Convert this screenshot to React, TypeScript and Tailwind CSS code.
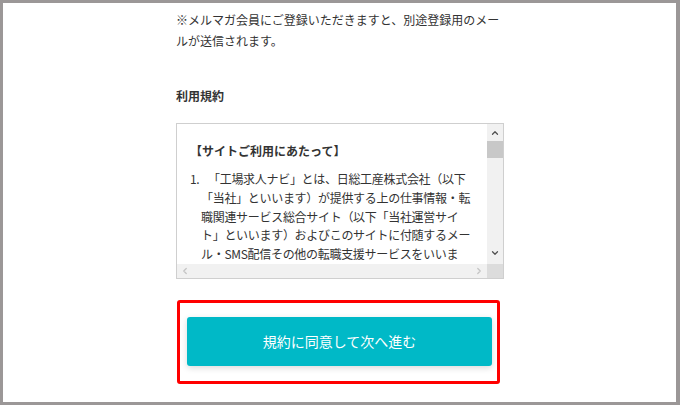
import { ChevronUp, ChevronDown, ChevronLeft, ChevronRight } from 'lucide-react'

const font = { fontFamily: '"Noto Sans CJK JP", "Noto Sans", sans-serif' }

export default function App() {
  return (
    <div
      className="w-[680px] h-[405px] bg-white border-[#9b9797] border-t-[3px] border-l-[3px] border-r-[4px] border-b-[3px] text-[#333]"
      style={font}
    >
      <div className="ml-[173px] w-[328px] pt-[6px]">
        {/* Notice */}
        <p className="text-[12px] leading-[21px]">
          ※メルマガ会員にご登録いただきますと、別途登録用のメールが送信されます。
        </p>

        {/* Terms */}
        <h2 className="mt-[34px] text-[12px] leading-[21px] font-bold">利用規約</h2>

        <div className="mt-[17px] h-[156px] border border-[#cfcfcf] flex flex-col">
          <div className="flex flex-1 min-h-0">
            <div className="flex-1 overflow-hidden pl-[13px] pt-[17px] text-[12px]">
              <p className="font-bold leading-[19px]">【サイトご利用にあたって】</p>
              <div className="mt-[10px] flex leading-[18.75px] tracking-[-0.3px]">
                <span className="w-[11px] shrink-0">1.</span>
                <p className="w-[272px] indent-[7px]">
                  「工場求人ナビ」とは、日総工産株式会社（以下「当社」といいます）が提供する上の仕事情報・転職関連サービス総合サイト（以下「当社運営サイト」といいます）およびこのサイトに付随するメール・SMS配信その他の転職支援サービスをいいます。
                </p>
              </div>
            </div>
            {/* vertical scrollbar */}
            <div className="w-[16px] bg-[#f1f1f1] flex flex-col items-center">
              <ChevronUp className="w-[10px] h-[10px] mt-[4px] text-[#505050]" strokeWidth={3} />
              <div className="mt-[3px] w-[16px] h-[17px] bg-[#c8c8c8]" />
              <div className="flex-1" />
              <ChevronDown className="w-[10px] h-[10px] mb-[6px] text-[#505050]" strokeWidth={3} />
            </div>
          </div>
          {/* horizontal scrollbar */}
          <div className="h-[14px] flex">
            <div className="flex-1 bg-[#f1f1f1] flex items-center justify-between px-[3px]">
              <ChevronLeft className="w-[10px] h-[10px] text-[#c4c4c4]" strokeWidth={3} />
              <ChevronRight className="w-[10px] h-[10px] text-[#c4c4c4]" strokeWidth={3} />
            </div>
            <div className="w-[16px] bg-[#dcdcdc]" />
          </div>
        </div>

        {/* Agree button */}
        <div className="mt-[21px] ml-px w-[323px] h-[84px] border-[3px] border-[#ff0000] rounded-[3px]">
          <button className="mt-[14px] ml-[7px] w-[305px] h-[49px] rounded-[3px] bg-[#00b9c7] text-white text-[14px] shadow-[0_2px_6px_rgba(0,0,0,0.15)]">
            規約に同意して次へ進む
          </button>
        </div>
      </div>
    </div>
  )
}
